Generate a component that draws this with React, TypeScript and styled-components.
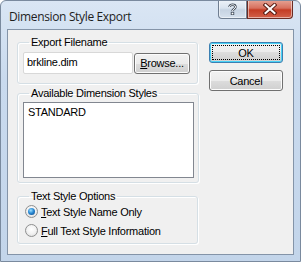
import React from 'react';
import styled, { createGlobalStyle } from 'styled-components';

const GlobalStyle = createGlobalStyle`
  html, body { margin: 0; padding: 0; background: #ffffff; }
  * { box-sizing: border-box; }
`;

const Window = styled.div`
  width: 301px;
  height: 262px;
  display: flex;
  flex-direction: column;
  background: linear-gradient(180deg, #dae6f4 0%, #c9daee 30%, #c3d5ea 100%);
  border: 1px solid #7a8a9e;
  border-radius: 6px 6px 0 0;
  font-family: 'Liberation Sans', Arial, sans-serif;
  font-size: 11px;
  color: #000;
  overflow: hidden;
`;

const TitleBar = styled.div`
  height: 28px;
  display: flex;
  align-items: flex-start;
  padding-left: 8px;
`;

const Title = styled.div`
  flex: 1;
  padding-top: 7px;
  font-family: 'Open Sans', 'Noto Sans', sans-serif;
  font-size: 12px;
  letter-spacing: -0.35px;
  color: #1e1e1e;
`;

const CaptionButton = styled.div<{ $close?: boolean }>`
  width: ${({ $close }) => ($close ? '46px' : '29px')};
  height: 19px;
  margin-top: -1px;
  display: flex;
  align-items: center;
  justify-content: center;
  border: 1px solid ${({ $close }) => ($close ? '#6b2c24' : '#6f7e91')};
  border-top: none;
  border-radius: ${({ $close }) => ($close ? '0 0 4px 0' : '0 0 0 4px')};
  background: ${({ $close }) =>
    $close
      ? 'linear-gradient(180deg, #e6a596 0%, #d7705e 45%, #c43c24 55%, #d2614a 100%)'
      : 'linear-gradient(180deg, #eef3f9 0%, #d9e3ee 45%, #c6d3e2 55%, #d6e1ee 100%)'};
  box-shadow: inset 0 0 0 1px rgba(255, 255, 255, 0.5);
  margin-right: ${({ $close }) => ($close ? '7px' : '0')};
`;

const Client = styled.div`
  flex: 1;
  margin: 0 6px 6px 6px;
  border: 1px solid #8494a8;
  background: #f0f0f0;
  display: flex;
  padding: 6px 0 0 9px;
  gap: 11px;
  letter-spacing: -0.25px;
`;

const LeftColumn = styled.div`
  width: 181px;
  display: flex;
  flex-direction: column;
`;

const Group = styled.fieldset<{ $h: number; $mt?: number; $pt?: number }>`
  margin: ${({ $mt }) => $mt ?? 0}px 0 0 0;
  height: ${({ $h }) => $h}px;
  border: 1px solid #d5dfe5;
  border-radius: 3px;
  padding: ${({ $pt }) => $pt ?? 3}px 4px 4px 5px;
  box-shadow: inset 1px 1px 0 #ffffff, 1px 1px 0 #ffffff;
`;

const Legend = styled.legend`
  padding: 0 2px;
  margin-left: 6px;
  line-height: 13px;
`;

const Row = styled.div`
  display: flex;
  align-items: center;
  gap: 1px;
`;

const TextBox = styled.div`
  width: 110px;
  height: 22px;
  background: #fff;
  border: 1px solid #d8d8d8;
  border-radius: 2px;
  padding: 3px 0 0 3px;
`;

const Button = styled.div<{ $w: number; $default?: boolean }>`
  width: ${({ $w }) => $w}px;
  height: 21px;
  display: flex;
  align-items: center;
  justify-content: center;
  border: 1px solid ${({ $default }) => ($default ? '#3c7fb1' : '#707070')};
  border-radius: 3px;
  background: linear-gradient(180deg, #f2f2f2 0%, #ebebeb 50%, #dddddd 50%, #cfcfcf 100%);
  box-shadow: inset 0 0 0 1px ${({ $default }) => ($default ? '#48d2f7' : '#fcfcfc')};
  position: relative;
  font-size: 11px;
  u { text-decoration: underline; text-underline-offset: 1px; }
`;

const FocusRing = styled.span`
  position: absolute;
  inset: 2px;
  border: 1px dotted #000;
`;

const ListBox = styled.div`
  width: 171px;
  height: 76px;
  background: #fff;
  border: 1px solid #828790;
  padding: 3px 4px;
`;

const RadioRow = styled.div<{ $first?: boolean }>`
  display: flex;
  align-items: center;
  height: 19px;
  gap: 3px;
  padding-left: 2px;
  margin-top: ${({ $first }) => ($first ? '-1px' : '0')};
  u { text-decoration: underline; text-underline-offset: 1px; }
`;

const RadioDot = styled.span<{ $on?: boolean }>`
  width: 13px;
  height: 13px;
  border-radius: 50%;
  border: 1px solid #8e8f8f;
  background: radial-gradient(circle at 50% 40%, #ffffff 0%, #f2f2f2 50%, #d6d6d6 100%);
  display: flex;
  align-items: center;
  justify-content: center;
  &::after {
    content: '';
    width: 7px;
    height: 7px;
    border-radius: 50%;
    display: ${({ $on }) => ($on ? 'block' : 'none')};
    background: radial-gradient(circle at 40% 35%, #9fe0ff 0%, #2a8ad4 45%, #0c3f7d 100%);
  }
`;

const RightColumn = styled.div`
  display: flex;
  flex-direction: column;
  gap: 7px;
  padding-top: 6px;
`;

export default function App() {
  return (
    <>
      <GlobalStyle />
      <Window>
        <TitleBar>
          <Title>Dimension Style Export</Title>
          <CaptionButton>
            <svg width="11" height="12" viewBox="0 0 11 12">
              <path d="M2.5 4 C2.5 1 8.5 1 8.5 4 C8.5 6 5.5 6 5.5 8" fill="none" stroke="#3b4654" strokeWidth="2.4" />
              <path d="M2.5 4 C2.5 1 8.5 1 8.5 4 C8.5 6 5.5 6 5.5 8" fill="none" stroke="#fff" strokeWidth="1" />
              <rect x="4.2" y="9.2" width="2.6" height="2.6" fill="#fff" stroke="#3b4654" strokeWidth="0.8" />
            </svg>
          </CaptionButton>
          <CaptionButton $close>
            <svg width="14" height="12" viewBox="0 0 14 12">
              <path d="M2.5 2 L11.5 10 M11.5 2 L2.5 10" stroke="#5a1d14" strokeWidth="4" strokeLinecap="square" />
              <path d="M2.5 2 L11.5 10 M11.5 2 L2.5 10" stroke="#ffffff" strokeWidth="2" strokeLinecap="square" />
            </svg>
          </CaptionButton>
        </TitleBar>
        <Client>
          <LeftColumn>
            <Group $h={48}>
              <Legend>Export Filename</Legend>
              <Row>
                <TextBox>brkline.dim</TextBox>
                <Button $w={56}>
                  <span><u>B</u>rowse...</span>
                </Button>
              </Row>
            </Group>
            <Group $h={96} $mt={3} $pt={2}>
              <Legend>Available Dimension Styles</Legend>
              <ListBox>STANDARD</ListBox>
            </Group>
            <Group $h={54} $mt={7} $pt={0}>
              <Legend>Text Style Options</Legend>
              <RadioRow $first>
                <RadioDot $on />
                <span><u>T</u>ext Style Name Only</span>
              </RadioRow>
              <RadioRow>
                <RadioDot />
                <span><u>F</u>ull Text Style Information</span>
              </RadioRow>
            </Group>
          </LeftColumn>
          <RightColumn>
            <Button $w={74} $default>
              <FocusRing />
              OK
            </Button>
            <Button $w={74}>Cancel</Button>
          </RightColumn>
        </Client>
      </Window>
    </>
  );
}
